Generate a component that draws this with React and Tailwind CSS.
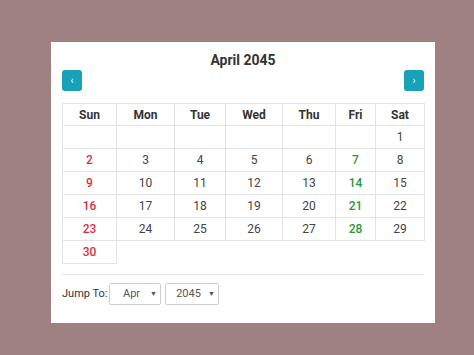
import React from "react";

const widths = [54, 58, 51, 57, 53, 40, 49];
const heads = ["Sun", "Mon", "Tue", "Wed", "Thu", "Fri", "Sat"];
const weeks = [
  [null, null, null, null, null, null, 1],
  [2, 3, 4, 5, 6, 7, 8],
  [9, 10, 11, 12, 13, 14, 15],
  [16, 17, 18, 19, 20, 21, 22],
  [23, 24, 25, 26, 27, 28, 29],
  [30],
];

function colorFor(i) {
  if (i === 0) return "text-[#e0303f] font-medium";
  if (i === 5) return "text-[#2a9a3a] font-medium";
  return "text-[#444]";
}

export default function App() {
  return (
    <div
      className="w-full h-[355px] bg-[#a08181] pt-[42px] pl-[51px]"
      style={{ fontFamily: "Roboto, 'Liberation Sans', sans-serif" }}
    >
      <div className="w-[384px] h-[281px] bg-white px-[11px] pt-[8px]">
        <h2 className="h-[20px] leading-[20px] text-center text-[14px] font-bold text-[#333]">
          April 2045
        </h2>
        <div className="flex justify-between">
          <button className="w-[20px] h-[21px] rounded-[3px] bg-[#17a2b8] text-white text-[10px] leading-[21px] flex items-center justify-center">
            ‹
          </button>
          <button className="w-[20px] h-[21px] rounded-[3px] bg-[#17a2b8] text-white text-[10px] leading-[21px] flex items-center justify-center">
            ›
          </button>
        </div>
        <table className="mt-[12px] border-collapse table-fixed w-[362px]">
          <colgroup>
            {widths.map((w, i) => (
              <col key={i} style={{ width: w }} />
            ))}
          </colgroup>
          <thead>
            <tr>
              {heads.map((h) => (
                <th
                  key={h}
                  className="h-[22px] border border-[#e3e3e3] text-[12px] font-bold text-[#333] text-center p-0"
                >
                  {h}
                </th>
              ))}
            </tr>
          </thead>
          <tbody>
            {weeks.map((wk, r) => (
              <tr key={r}>
                {wk.map((d, i) => (
                  <td
                    key={i}
                    className={`h-[23px] border border-[#e3e3e3] text-[12px] text-center p-0 ${colorFor(i)}`}
                  >
                    {d}
                  </td>
                ))}
              </tr>
            ))}
          </tbody>
        </table>
        <div className="mt-[10px] h-px bg-[#e3e3e3] w-[362px]" />
        <div className="mt-[8px] flex items-center">
          <span className="w-[47px] text-[11px] text-[#333]">Jump To:</span>
          <div className="w-[52px] h-[22px] border border-[#d0d0d0] rounded-[2px] flex items-center text-[11px] text-[#555]">
            <span className="flex-1 text-center pl-[3px]">Apr</span>
            <span className="text-[7px] pr-[3px]">▼</span>
          </div>
          <div className="ml-[4px] w-[54px] h-[22px] border border-[#d0d0d0] rounded-[2px] flex items-center text-[11px] text-[#555]">
            <span className="flex-1 text-center pl-[3px]">2045</span>
            <span className="text-[7px] pr-[3px]">▼</span>
          </div>
        </div>
      </div>
    </div>
  );
}
